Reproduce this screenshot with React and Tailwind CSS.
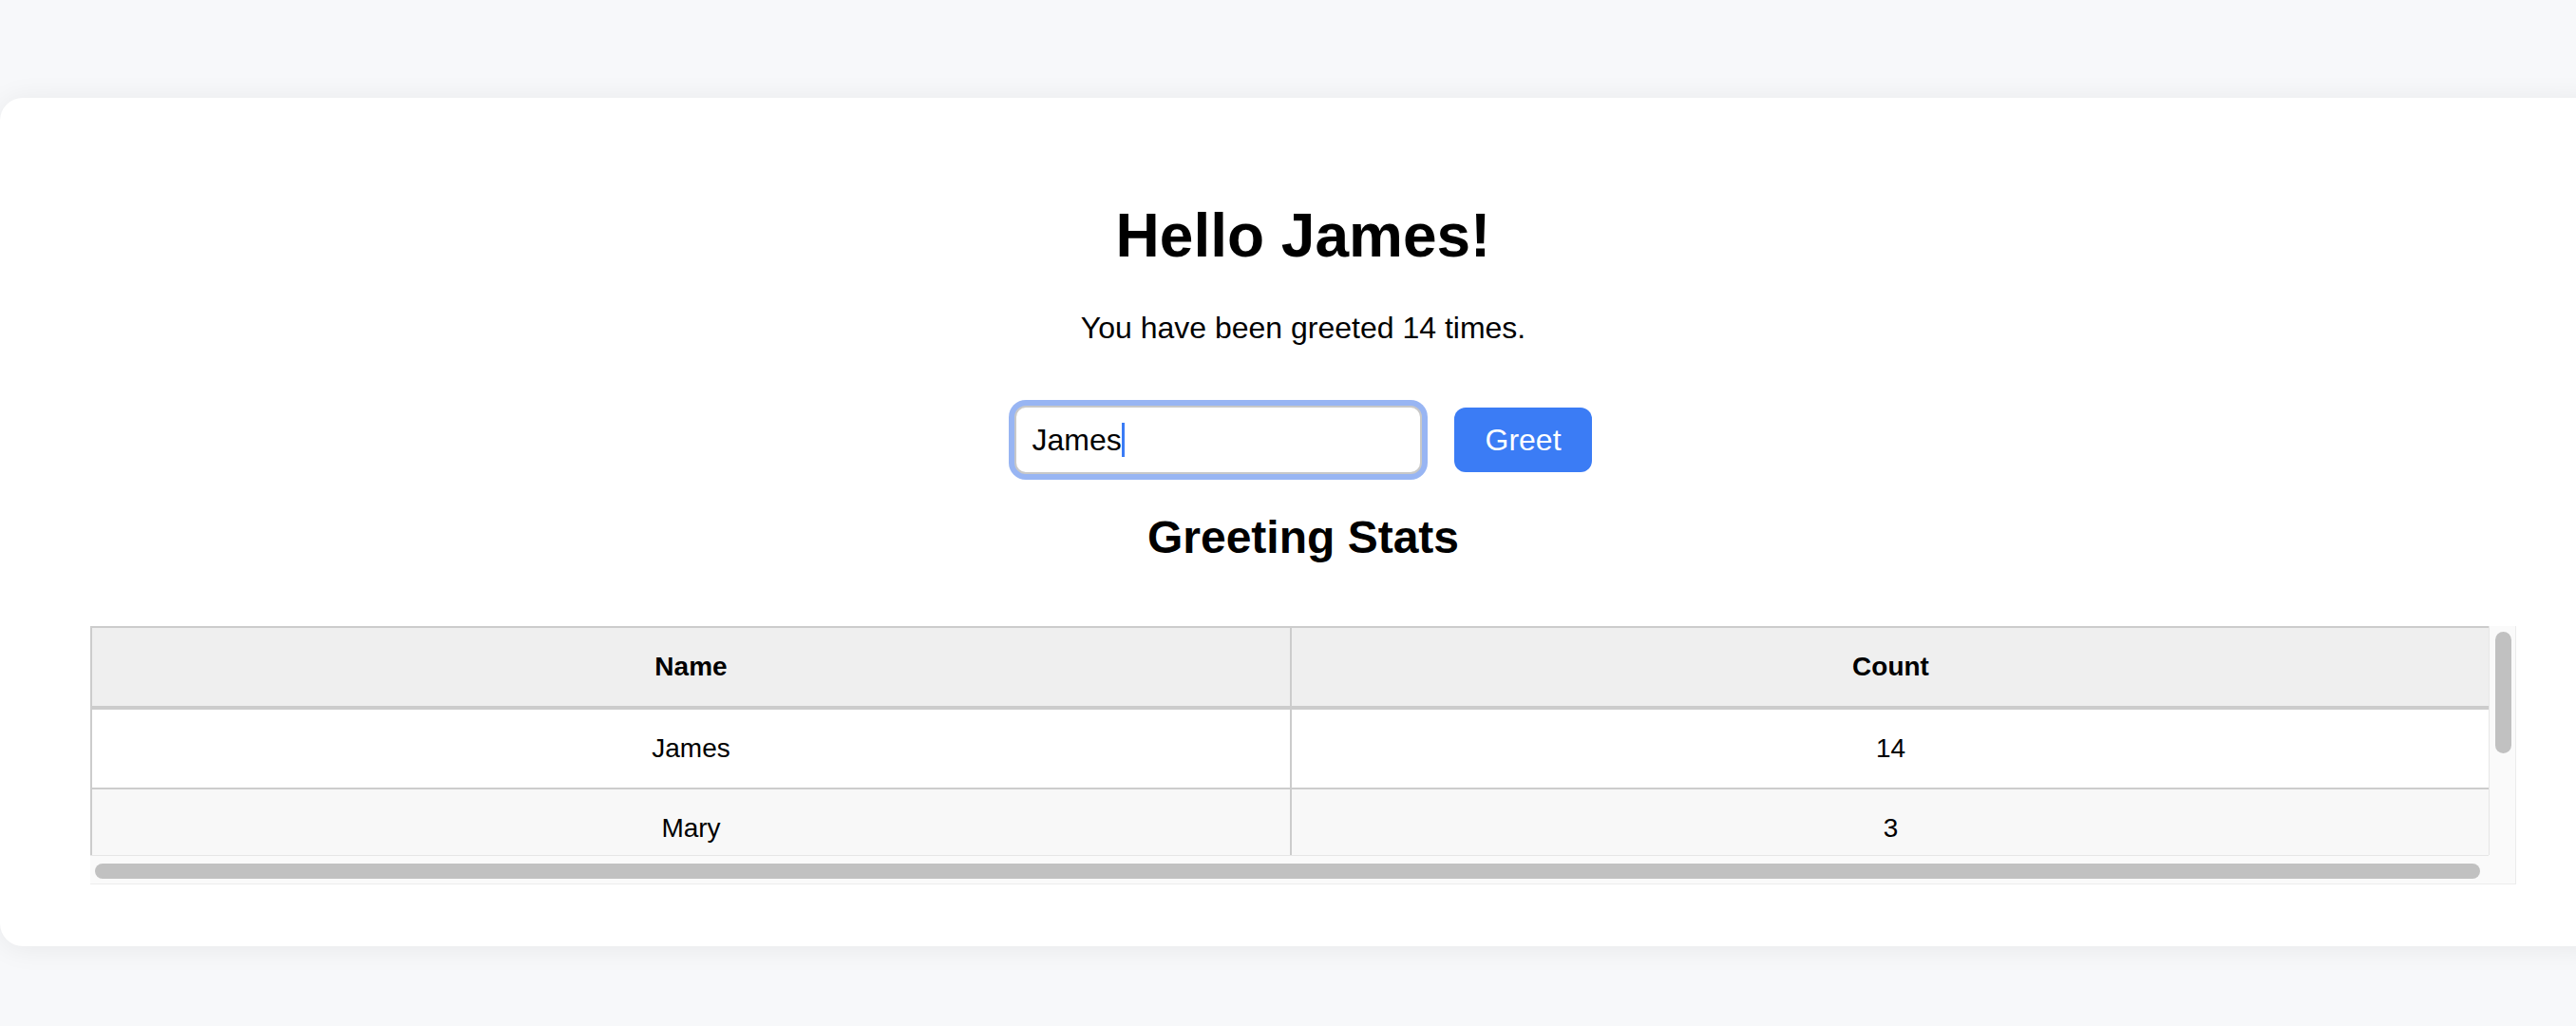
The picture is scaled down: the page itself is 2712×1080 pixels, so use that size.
import { useState } from 'react';

const stats = [
  { name: 'James', count: 14 },
  { name: 'Mary', count: 3 },
];

const App = () => {
  const [name, setName] = useState('James');

  return (
    <div className="min-h-screen w-full overflow-hidden bg-[#f7f8fa] pt-[103px] font-['Liberation_Sans',Arial,sans-serif] text-black">
      {/* card */}
      <div className="w-[2744px] bg-white rounded-[24px] shadow-[0_2px_30px_rgba(0,0,0,0.07)] px-[95px] pt-[108px] pb-[65px] flex flex-col items-center">
        <h1 className="text-[64px] leading-[74px] font-bold">Hello {name}!</h1>
        <p className="mt-[42px] text-[32px] leading-[36px]">You have been greeted 14 times.</p>

        {/* form */}
        <div className="mt-[64px] flex items-center gap-[34px]">
          <div className="relative">
            <input
              value={name}
              onChange={(e) => setName(e.target.value)}
              className="block w-[429px] h-[72px] px-[16px] text-[32px] border-2 border-[#c8c8c8] rounded-[12px] bg-white shadow-[0_0_0_6px_#98b5f3] outline-none"
            />
            <span className="absolute left-[113px] top-[18px] w-[3px] h-[36px] bg-[#3b7cf5]" />
          </div>
          <button className="h-[68px] px-[32px] rounded-[12px] bg-[#3b7cf5] text-white text-[32px] leading-[36px]">
            Greet
          </button>
        </div>

        <h2 className="mt-[39px] text-[48px] leading-[56px] font-bold">Greeting Stats</h2>

        {/* stats table with scrollbars */}
        <div className="mt-[65px] self-stretch grid grid-cols-[1fr_28px] grid-rows-[241px_30px] border-r border-b border-[#ececec]">
          <div className="overflow-hidden">
            <table className="w-[2528px] table-fixed border-separate border-spacing-0 border-l-2 border-t-2 border-[#cccccc] text-[28px]">
              <thead>
                <tr className="bg-[#efefef]">
                  <th className="h-[86px] p-0 font-bold text-center border-b-4 border-r-2 border-[#cccccc]">Name</th>
                  <th className="h-[86px] p-0 font-bold text-center border-b-4 border-r-2 border-[#cccccc]">Count</th>
                </tr>
              </thead>
              <tbody>
                {stats.map((s, i) => (
                  <tr key={s.name} className={i % 2 === 0 ? 'bg-white' : 'bg-[#f8f8f8]'}>
                    <td className="h-[84px] p-0 text-center border-b-2 border-r-2 border-[#cccccc]">{s.name}</td>
                    <td className="h-[84px] p-0 text-center border-b-2 border-r-2 border-[#cccccc]">{s.count}</td>
                  </tr>
                ))}
              </tbody>
            </table>
          </div>
          {/* vertical scrollbar */}
          <div className="bg-[#fafafa] border-l border-[#e6e6e6] pt-[6px] pl-[6px] pr-[4px]">
            <div className="h-[128px] rounded-full bg-[#c1c1c1]" />
          </div>
          {/* horizontal scrollbar */}
          <div className="bg-[#fafafa] border-t border-[#e6e6e6] pt-[8px] pl-[5px] pr-[9px]">
            <div className="h-[16px] rounded-full bg-[#c1c1c1]" />
          </div>
          <div className="bg-[#fafafa]" />
        </div>
      </div>
    </div>
  );
};

export default App;
